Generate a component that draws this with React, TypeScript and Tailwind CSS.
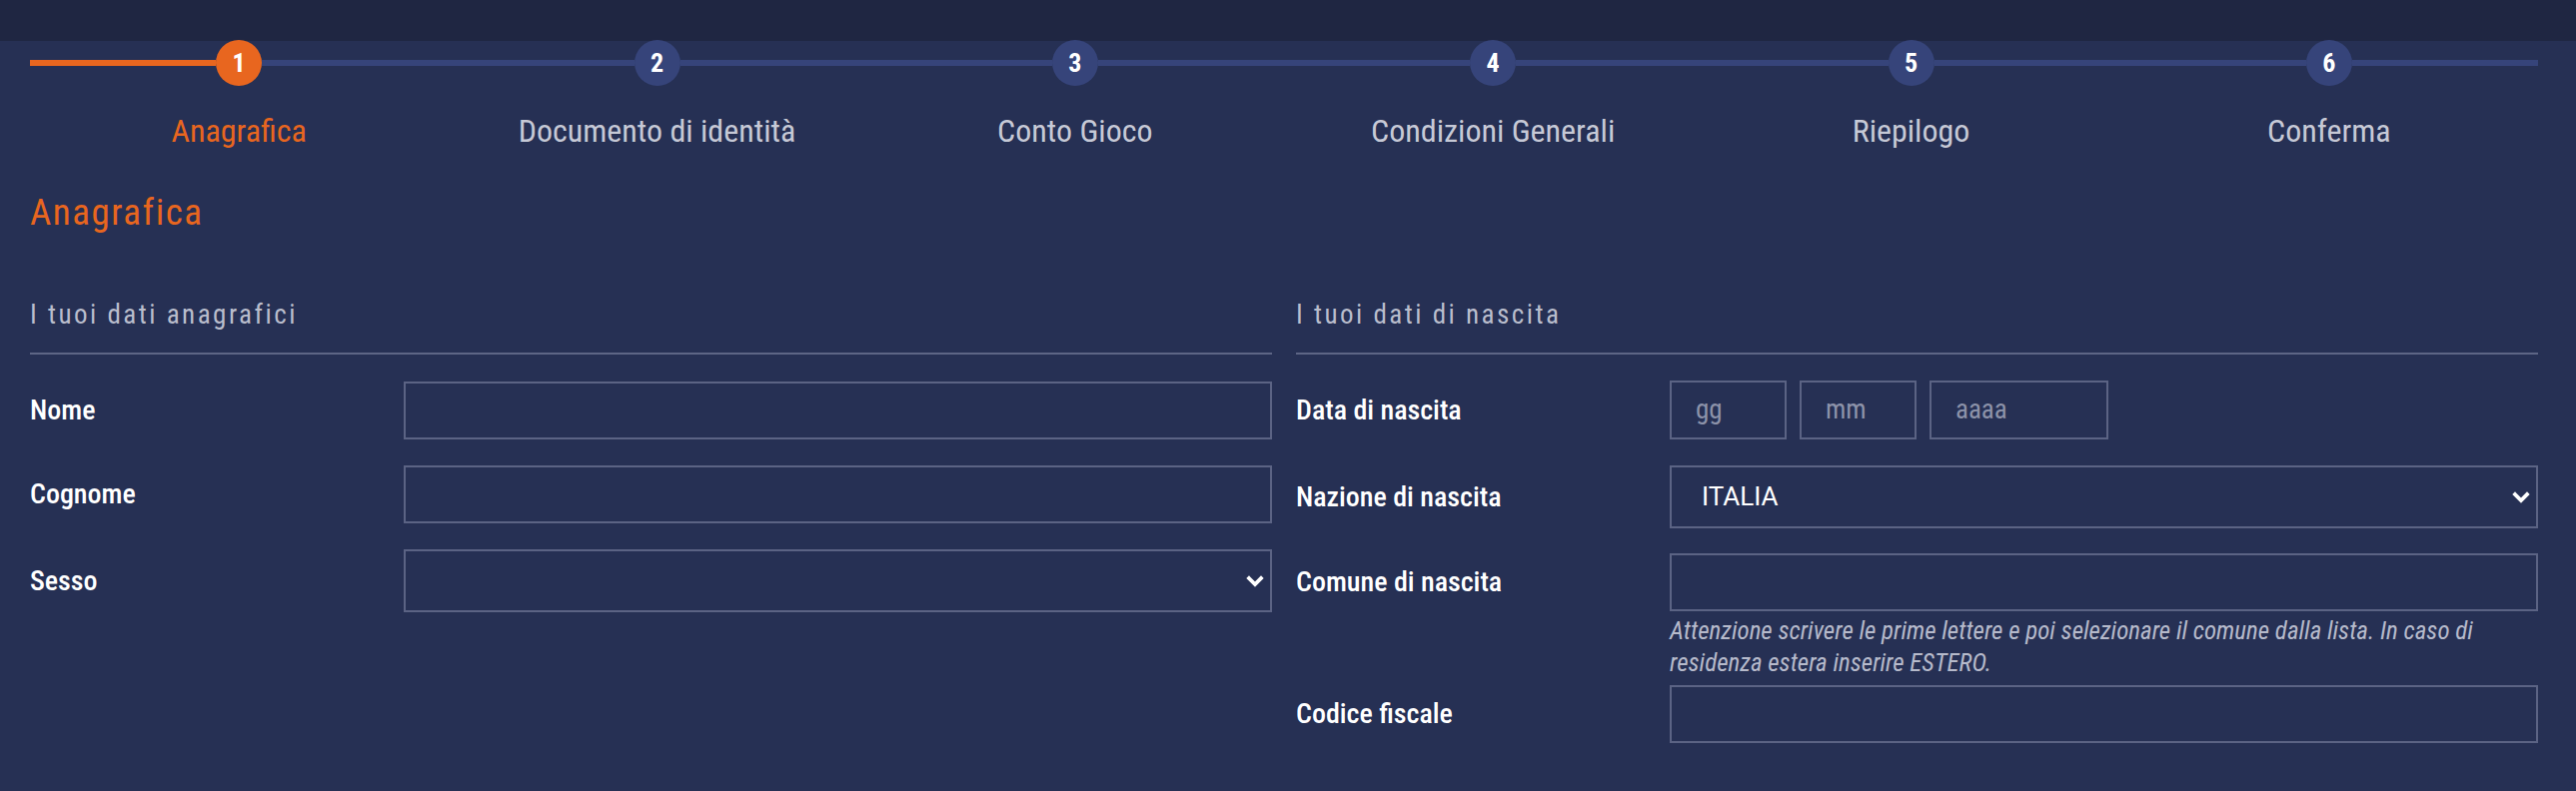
const FONT = { fontFamily: '"Roboto Condensed", "Liberation Sans Narrow", "DejaVu Sans Condensed", Roboto, sans-serif' };

const steps = ['Anagrafica', 'Documento di identità', 'Conto Gioco', 'Condizioni Generali', 'Riepilogo', 'Conferma'];

function Stepper() {
  return (
    <div className="grid grid-cols-6">
      {steps.map((label, i) => {
        const active = i === 0;
        return (
          <div key={label} className="flex flex-col items-center">
            <div className="flex w-full items-center">
              <div className={`h-[6px] flex-1 ${active ? 'bg-[#e8661f]' : 'bg-[#36447a]'}`} />
              <div
                className={`flex h-[46px] w-[46px] items-center justify-center rounded-full text-[26px] font-bold text-white ${
                  active ? 'bg-[#e8661f]' : 'bg-[#36447a]'
                }`}
              >
                {i + 1}
              </div>
              <div className="h-[6px] flex-1 bg-[#36447a]" />
            </div>
            <div className={`mt-[26px] text-[32px] leading-[38px] ${active ? 'text-[#e8661f]' : 'text-[#c6c9d6]'}`}>{label}</div>
          </div>
        );
      })}
    </div>
  );
}

function Field({ label, children }: { label: string; children: React.ReactNode }) {
  return (
    <div className="flex items-center">
      <div className="w-[374px] shrink-0 text-[28px] font-medium text-white">{label}</div>
      <div className="flex-1">{children}</div>
    </div>
  );
}

function TextBox({ h = 'h-[58px]' }: { h?: string }) {
  return <div className={`${h} w-full border-2 border-[#5b6384] bg-[#263054]`} />;
}

function Chevron() {
  return (
    <svg width="20" height="14" viewBox="0 0 20 14" className="shrink-0">
      <path d="M4 4 L10 10 L16 4" fill="none" stroke="white" strokeWidth="3.8" strokeLinecap="square" strokeLinejoin="miter" />
    </svg>
  );
}

function SelectBox({ value, h = 'h-[63px]' }: { value?: string; h?: string }) {
  return (
    <div className={`${h} flex w-full items-center justify-between border-2 border-[#5b6384] pl-[30px] pr-[5px]`}>
      <span className="text-[26px] text-white" style={{ fontFamily: 'Roboto, sans-serif' }}>
        {value}
      </span>
      <Chevron />
    </div>
  );
}

function DateBox({ w, ph }: { w: string; ph: string }) {
  return (
    <div className={`${w} flex h-[59px] items-center border-2 border-[#5b6384] pl-[24px]`}>
      <span className="whitespace-nowrap text-[27px] text-[#8d93aa]">{ph}</span>
    </div>
  );
}

function SectionHead({ title }: { title: string }) {
  return (
    <div>
      <div className="text-[27px] leading-[32px] tracking-[2.5px] text-[#b9bdcc]">{title}</div>
      <div className="mt-[22px] h-[2px] bg-[#5d6585]" />
    </div>
  );
}

export default function App() {
  return (
    <div className="min-h-[792px] bg-[#263054]" style={FONT}>
      <div className="h-[41px] bg-[#1f2642]" />
      <div className="pl-[30px] pr-[38px]">
        <div className="-mt-px">
          <Stepper />
        </div>
        <h1 className="mt-[41px] text-[37px] leading-[44px] tracking-[1.5px] text-[#e8661f]">Anagrafica</h1>
        <div className="mt-[64px] grid grid-cols-2 gap-[24px]">
          <div>
            <SectionHead title="I tuoi dati anagrafici" />
            <div className="mt-[27px] flex flex-col gap-[26px]">
              <Field label="Nome">
                <TextBox />
              </Field>
              <Field label="Cognome">
                <TextBox />
              </Field>
              <Field label="Sesso">
                <SelectBox />
              </Field>
            </div>
          </div>
          <div>
            <SectionHead title="I tuoi dati di nascita" />
            <div className="mt-[26px] flex flex-col">
              <Field label="Data di nascita">
                <div className="flex gap-[13px]">
                  <DateBox w="w-[117px]" ph="gg" />
                  <DateBox w="w-[117px]" ph="mm" />
                  <DateBox w="w-[179px]" ph="aaaa" />
                </div>
              </Field>
              <div className="mt-[26px]">
                <Field label="Nazione di nascita">
                  <SelectBox value="ITALIA" />
                </Field>
              </div>
              <div className="mt-[25px]">
                <Field label="Comune di nascita">
                  <TextBox />
                </Field>
              </div>
              <div className="ml-[374px] mt-[4px] text-[25px] italic leading-[32px] text-[#b6bacb]">
                Attenzione scrivere le prime lettere e poi selezionare il comune dalla lista. In caso di
                <br />
                residenza estera inserire ESTERO.
              </div>
              <div className="mt-[6px]">
                <Field label="Codice fiscale">
                  <TextBox />
                </Field>
              </div>
            </div>
          </div>
        </div>
      </div>
    </div>
  );
}
